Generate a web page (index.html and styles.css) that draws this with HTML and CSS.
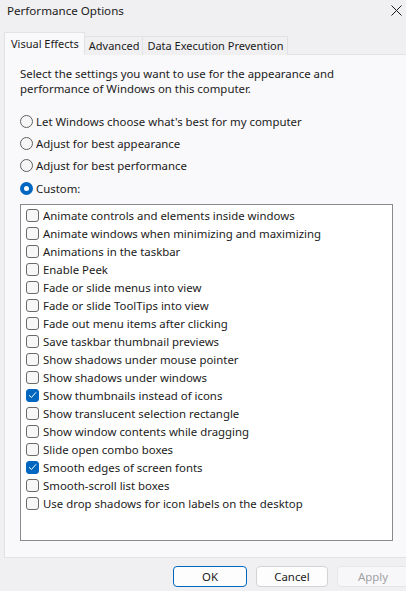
FILE: index.html
```html
<!DOCTYPE html>
<html>
<head>
<meta charset="utf-8">
<link rel="stylesheet" href="styles.css">
</head>
<body>
<div class="window">
  <div class="titlebar">
    <span class="title">Performance Options</span>
    <svg class="close" width="11" height="11" viewBox="0 0 11 11"><path d="M0.5 0.5L10.5 10.5M10.5 0.5L0.5 10.5" stroke="#1a1a1a" stroke-width="1"/></svg>
  </div>
  <div class="tabs">
    <div class="tab active">Visual Effects</div>
    <div class="tab">Advanced</div>
    <div class="tab">Data Execution Prevention</div>
  </div>
  <div class="panel">
    <p class="desc">Select the settings you want to use for the appearance and<br>performance of Windows on this computer.</p>
    <div class="radios">
      <label class="radio"><span class="rb"></span>Let Windows choose what's best for my computer</label>
      <label class="radio"><span class="rb"></span>Adjust for best appearance</label>
      <label class="radio"><span class="rb"></span>Adjust for best performance</label>
      <label class="radio"><span class="rb on"></span>Custom:</label>
    </div>
    <div class="list">
      <div class="item"><span class="cb"></span>Animate controls and elements inside windows</div>
      <div class="item"><span class="cb"></span>Animate windows when minimizing and maximizing</div>
      <div class="item"><span class="cb"></span>Animations in the taskbar</div>
      <div class="item"><span class="cb"></span>Enable Peek</div>
      <div class="item"><span class="cb"></span>Fade or slide menus into view</div>
      <div class="item"><span class="cb"></span>Fade or slide ToolTips into view</div>
      <div class="item"><span class="cb"></span>Fade out menu items after clicking</div>
      <div class="item"><span class="cb"></span>Save taskbar thumbnail previews</div>
      <div class="item"><span class="cb"></span>Show shadows under mouse pointer</div>
      <div class="item"><span class="cb"></span>Show shadows under windows</div>
      <div class="item"><span class="cb on"><svg width="9" height="8" viewBox="0 0 9 8"><path d="M1 4.2L3.4 6.5L8 1.3" fill="none" stroke="#fff" stroke-width="1"/></svg></span>Show thumbnails instead of icons</div>
      <div class="item"><span class="cb"></span>Show translucent selection rectangle</div>
      <div class="item"><span class="cb"></span>Show window contents while dragging</div>
      <div class="item"><span class="cb"></span>Slide open combo boxes</div>
      <div class="item"><span class="cb on"><svg width="9" height="8" viewBox="0 0 9 8"><path d="M1 4.2L3.4 6.5L8 1.3" fill="none" stroke="#fff" stroke-width="1"/></svg></span>Smooth edges of screen fonts</div>
      <div class="item"><span class="cb"></span>Smooth-scroll list boxes</div>
      <div class="item"><span class="cb"></span>Use drop shadows for icon labels on the desktop</div>
    </div>
  </div>
  <div class="footer">
    <button class="btn default">OK</button>
    <button class="btn">Cancel</button>
    <button class="btn disabled">Apply</button>
  </div>
</div>
</body>
</html>
```
FILE: styles.css
```css
html, body {
  margin: 0;
  padding: 0;
}
body {
  width: 406px;
  height: 591px;
  overflow: hidden;
  background: #f0eff1;
  font-family: "Noto Sans", "Open Sans", sans-serif;
  font-size: 11.4px;
  color: #1b1b1b;
}
.window {
  width: 406px;
  height: 591px;
  display: flex;
  flex-direction: column;
}
.titlebar {
  height: 32px;
  display: flex;
  align-items: flex-start;
  justify-content: space-between;
  padding: 2px 4px 0 7px;
  box-sizing: border-box;
}
.title {
  font-size: 11.6px;
  line-height: 17px;
}
.close {
  margin-top: 3px;
}
.tabs {
  display: flex;
  align-items: flex-end;
  margin-left: 4px;
  height: 23px;
  position: relative;
  z-index: 1;
  margin-bottom: -1px;
  font-size: 11px;
}
.tab {
  height: 19px;
  line-height: 18px;
  padding: 0 3px 0 4px;
  border: 1px solid #e2e1e4;
  border-bottom: none;
  border-left: none;
  background: #f0eff1;
  box-sizing: border-box;
}
.tab.active {
  height: 23px;
  line-height: 21px;
  background: #f9f8fa;
  border-left: 1px solid #e2e1e4;
  padding: 0 5px 0 6px;
}
.panel {
  margin-left: 4px;
  width: 410px;
  height: 504px;
  box-sizing: border-box;
  background: #f9f8fa;
  border: 1px solid #e2e1e4;
  padding: 11px 0 0 15px;
}
.desc {
  margin: 0;
  line-height: 15px;
}
.radios {
  margin-top: 14px;
  display: flex;
  flex-direction: column;
}
.radio {
  display: flex;
  align-items: center;
  height: 22.3px;
}
.rb {
  width: 13px;
  height: 13px;
  box-sizing: border-box;
  border: 1px solid #606060;
  border-radius: 50%;
  margin-right: 3px;
  background: #f6f6f6;
}
.rb.on {
  background: #fff;
  border: 4px solid #0067c0;
}
.list {
  margin-top: 5px;
  width: 373px;
  height: 337px;
  box-sizing: border-box;
  background: #ffffff;
  border: 1px solid #8a8a8a;
  padding: 1px 0 0 5px;
}
.item {
  display: flex;
  align-items: center;
  height: 18px;
}
.cb {
  width: 13px;
  height: 13px;
  box-sizing: border-box;
  border: 1px solid #6a6a6a;
  border-radius: 3px;
  margin-right: 4px;
  background: #f7f7f7;
  display: flex;
  align-items: center;
  justify-content: center;
}
.cb.on {
  background: #0067c0;
  border-color: #0067c0;
}
.footer {
  display: flex;
  gap: 9px;
  padding: 8px 0 0 173px;
}
.btn {
  font-family: inherit;
  font-size: 11.4px;
  color: #1b1b1b;
  width: 72px;
  height: 21px;
  padding: 0;
  background: #fdfdfd;
  border: 1px solid #d3d2d5;
  border-radius: 4px;
  flex-shrink: 0;
}
.btn.default {
  width: 74px;
  border: 1px solid #0067c0;
}
.btn.disabled {
  color: #a2a1a4;
  background: #f7f6f8;
  border-color: #e6e5e8;
}
```
